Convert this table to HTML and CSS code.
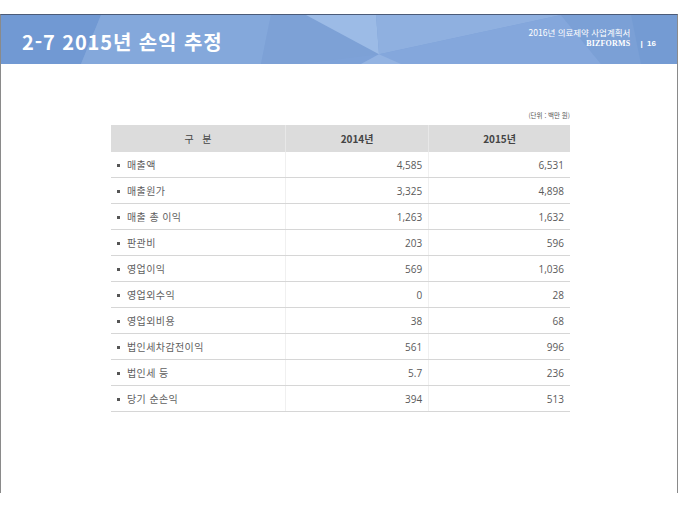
FILE: index.html
```html
<!DOCTYPE html>
<html lang="ko">
<head>
<meta charset="utf-8">
<title>2-7 2015년 손익 추정</title>
<link rel="stylesheet" href="styles.css">
</head>
<body>
<div class="slide">
  <header class="band">
    <svg class="band-bg" viewBox="0 0 676 50" preserveAspectRatio="none" aria-hidden="true">
      <rect x="0" y="0" width="676" height="50" fill="#7ea2d8"/>
      <polygon points="0,0 100,0 80,50 0,50" fill="#7199d3"/>
      <polygon points="100,0 270,0 260,50 80,50" fill="#84a8db"/>
      <polygon points="270,0 305,0 378,40 300,50 260,50" fill="#7da1d6"/>
      <polygon points="305,0 375,0 378,40" fill="#9cbbe6"/>
      <polygon points="375,0 560,0 378,40" fill="#8fb0e0"/>
      <polygon points="378,40 560,0 600,50 360,50" fill="#84a7dc"/>
      <polygon points="360,50 378,40 400,50" fill="#93b3e2"/>
      <polygon points="560,0 676,0 676,50 600,50" fill="#7ba0d6"/>
      <polygon points="630,0 676,0 676,50 640,50" fill="#749bd3"/>
    </svg>
    <h1 class="title">2-7 2015년 손익 추정</h1>
    <div class="meta">
      <div class="meta-text">
        <div class="meta-doc">2016년 의료제약 사업계획서</div>
        <div class="meta-brand">BIZFORMS</div>
      </div>
      <div class="meta-page">|&nbsp;&nbsp;16</div>
    </div>
  </header>
  <main class="content">
    <div class="unit">(단위 : 백만 원)</div>
    <table class="pl">
      <thead>
        <tr><th class="c-name">구 &nbsp;&nbsp;분</th><th>2014년</th><th>2015년</th></tr>
      </thead>
      <tbody>
        <tr><td class="c-name">매출액</td><td>4,585</td><td>6,531</td></tr>
        <tr><td class="c-name">매출원가</td><td>3,325</td><td>4,898</td></tr>
        <tr><td class="c-name">매출 총 이익</td><td>1,263</td><td>1,632</td></tr>
        <tr><td class="c-name">판관비</td><td>203</td><td>596</td></tr>
        <tr><td class="c-name">영업이익</td><td>569</td><td>1,036</td></tr>
        <tr><td class="c-name">영업외수익</td><td>0</td><td>28</td></tr>
        <tr><td class="c-name">영업외비용</td><td>38</td><td>68</td></tr>
        <tr><td class="c-name">법인세차감전이익</td><td>561</td><td>996</td></tr>
        <tr><td class="c-name">법인세 등</td><td>5.7</td><td>236</td></tr>
        <tr><td class="c-name">당기 순손익</td><td>394</td><td>513</td></tr>
      </tbody>
    </table>
  </main>
</div>
</body>
</html>
```
FILE: styles.css
```css
html, body {
  margin: 0;
  padding: 0;
  background: #ffffff;
}
body {
  font-family: "Noto Sans CJK KR", "Noto Sans", sans-serif;
  color: #555;
}
.slide {
  margin-top: 14px;
  width: 678px;
  height: 479px;
  box-sizing: border-box;
  border-left: 1px solid #8a8a8a;
  border-right: 1px solid #8a8a8a;
  border-top: 1px solid #4b5b78;
  overflow: hidden;
}
.band {
  position: relative;
  height: 49px;
  display: flex;
  align-items: center;
  justify-content: space-between;
  padding: 0 21px 0 21px;
}
.band-bg {
  position: absolute;
  left: 0;
  top: 0;
  width: 100%;
  height: 100%;
  z-index: 0;
}
.title {
  position: relative;
  z-index: 1;
  margin: 0;
  font-family: "Noto Sans CJK KR", "Open Sans", sans-serif;
  font-weight: 700;
  font-size: 20px;
  color: #ffffff;
  letter-spacing: 0.9px;
  line-height: 1;
  padding-top: 4px;
}
.meta {
  position: relative;
  z-index: 1;
  display: flex;
  align-items: flex-end;
  gap: 10px;
  color: #ffffff;
  margin-top: -4px;
}
.meta-text {
  text-align: right;
  line-height: 11px;
}
.meta-doc {
  font-size: 8.5px;
}
.meta-brand {
  font-size: 8px;
  font-weight: 700;
  font-family: "Liberation Serif", serif;
  letter-spacing: 0.2px;
}
.meta-page {
  font-size: 8px;
  font-weight: 700;
  line-height: 11px;
  font-family: "Liberation Sans", sans-serif;
}
.content {
  padding: 45px 0 0 110px;
  width: 459px;
}
.unit {
  text-align: right;
  font-size: 6.5px;
  color: #555;
  line-height: 12px;
  margin-bottom: 4px;
}
.pl {
  width: 459px;
  border-collapse: collapse;
  font-size: 10px;
}
.pl th {
  background: #dcdcdc;
  height: 27px;
  padding: 0;
  font-weight: 700;
  color: #444;
  text-align: center;
  border-left: 1px solid #e8e8e8;
}
.pl th.c-name {
  font-weight: 400;
  width: 174px;
  border-left: none;
}
.pl td {
  height: 25px;
  padding: 0 6px;
  text-align: right;
  border-bottom: 1px solid #d6d6d6;
  border-left: 1px solid #f0f0f0;
  color: #5a5a5a;
  font-family: "Open Sans", "Noto Sans CJK KR", sans-serif;
}
.pl td.c-name {
  text-align: left;
  border-left: none;
  padding-left: 16px;
  position: relative;
  letter-spacing: 0.4px;
  color: #606060;
  font-family: "Noto Sans CJK KR", sans-serif;
}
.pl td.c-name::before {
  content: "";
  position: absolute;
  left: 6px;
  top: 12px;
  width: 3px;
  height: 3px;
  background: #555;
}
```
